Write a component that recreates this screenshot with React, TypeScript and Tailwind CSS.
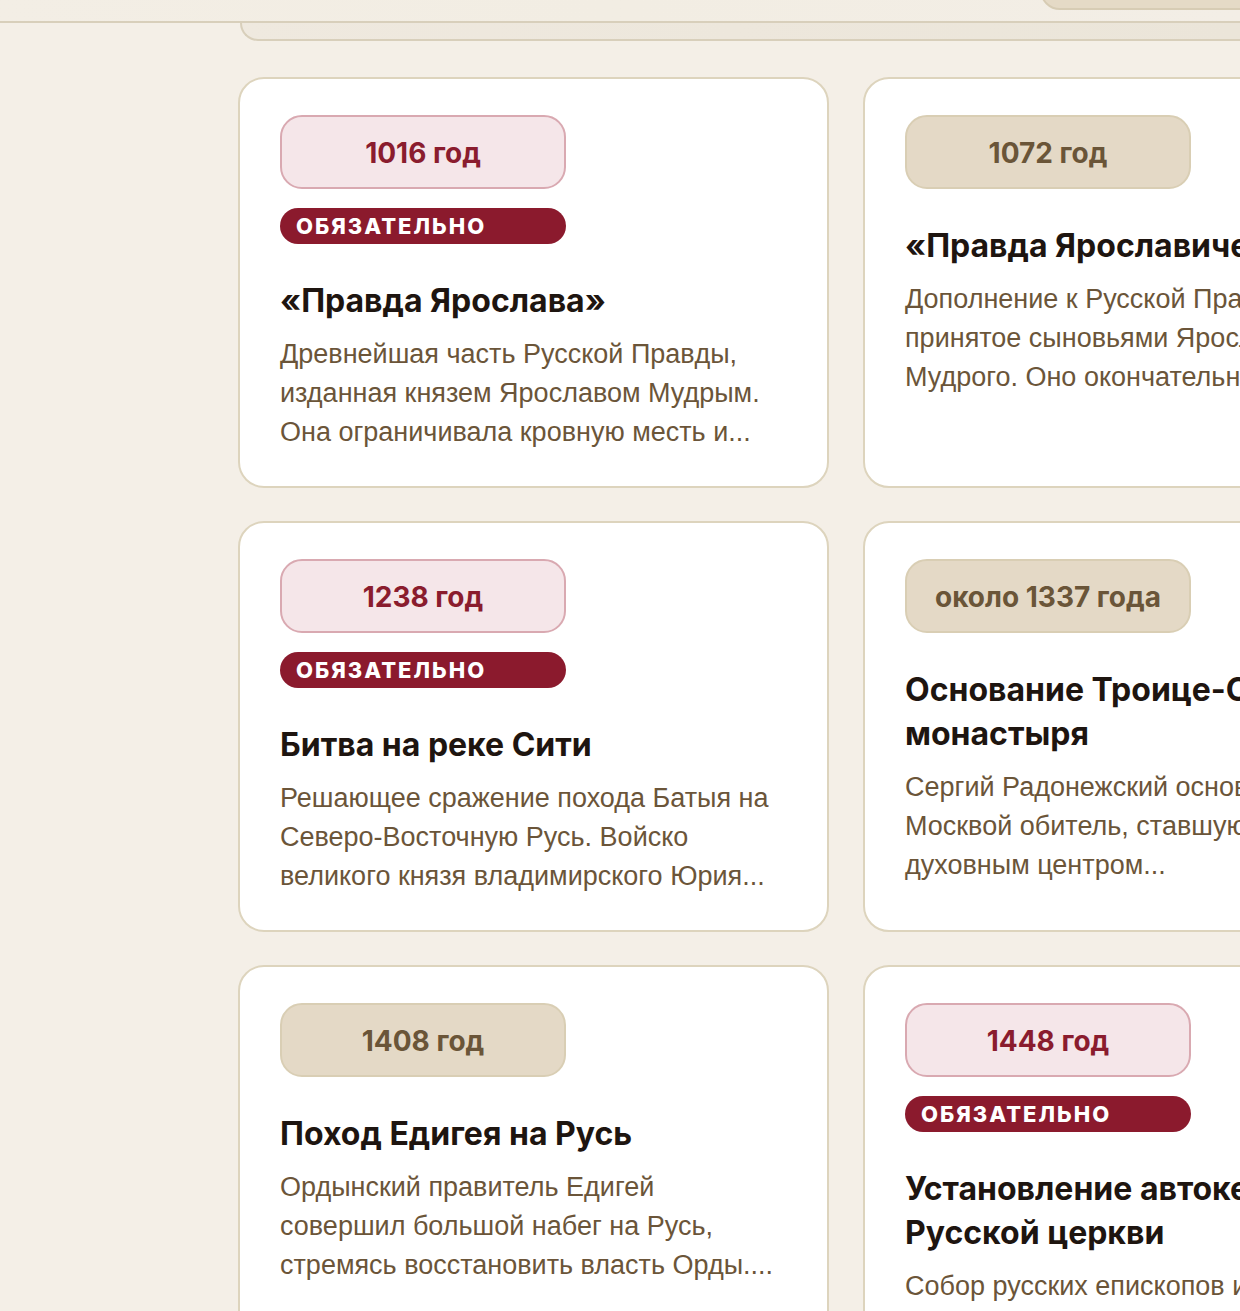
type Event = {
  year: string;
  required?: boolean;
  title: string;
  text: string;
};

const events: Event[] = [
  {
    year: "1016 год",
    required: true,
    title: "«Правда Ярослава»",
    text: "Древнейшая часть Русской Правды, изданная князем Ярославом Мудрым. Она ограничивала кровную месть и...",
  },
  {
    year: "1072 год",
    title: "«Правда Ярославичей»",
    text: "Дополнение к Русской Правде, принятое сыновьями Ярослава Мудрого. Оно окончательно отменило...",
  },
  {
    year: "1238 год",
    required: true,
    title: "Битва на реке Сити",
    text: "Решающее сражение похода Батыя на Северо-Восточную Русь. Войско великого князя владимирского Юрия...",
  },
  {
    year: "около 1337 года",
    title: "Основание Троице-Сергиева монастыря",
    text: "Сергий Радонежский основал под Москвой обитель, ставшую крупнейшим духовным центром...",
  },
  {
    year: "1408 год",
    title: "Поход Едигея на Русь",
    text: "Ордынский правитель Едигей совершил большой набег на Русь, стремясь восстановить власть Орды....",
  },
  {
    year: "1448 год",
    required: true,
    title: "Установление автокефалии Русской церкви",
    text: "Собор русских епископов избрал митрополитом Иону без согласия Константинополя...",
  },
];

function EventCard({ ev }: { ev: Event }) {
  return (
    <article className="rounded-[26px] border-2 border-[#ddd4bd] bg-white px-[40px] pt-[36px] pb-[34px]">
      <div
        className={
          ev.required
            ? "flex h-[74px] w-[286px] items-center justify-center rounded-[22px] border-2 border-[#d9a9b1] bg-[#f5e6e9] pt-[2px] text-[28px] font-bold text-[#8a1c2e]"
            : "flex h-[74px] w-[286px] items-center justify-center rounded-[22px] border-2 border-[#d9ceb4] bg-[#e4d9c6] pt-[2px] text-[28px] font-bold text-[#6a5538]"
        }
      >
        {ev.year}
      </div>
      {ev.required && (
        <div className="mt-[19px] flex h-[36px] w-[286px] items-center rounded-full bg-[#8b1a2d] pl-[16px] text-[22px] font-extrabold tracking-[2px] text-white">
          ОБЯЗАТЕЛЬНО
        </div>
      )}
      <h3 className="mt-[35px] text-[32px] leading-[44px] font-bold text-[#1e1510]">{ev.title}</h3>
      <p
        className="mt-[12px] text-[27px] leading-[39px] text-[#6b5539]"
        style={{ fontFamily: "'Liberation Sans', Arial, sans-serif" }}
      >
        {ev.text}
      </p>
    </article>
  );
}

export default function App() {
  return (
    <div
      className="min-h-screen overflow-hidden bg-[#f4efe7]"
      style={{ fontFamily: "Inter, 'Noto Sans', sans-serif" }}
    >
      {/* sticky header edge */}
      <header className="relative h-[23px] border-b-2 border-[#d8cfbb] bg-gradient-to-r from-[#f3eee5] via-[#f2ede3] to-[#f3eee6]">
        <div className="absolute right-[-40px] top-[-30px] h-[40px] w-[240px] rounded-[20px] border-2 border-[#d7ccb4] bg-[#e5dac6]" />
      </header>
      <div className="ml-[240px] h-[18px] rounded-bl-[18px] border-b-2 border-l-2 border-[#d8cfbb] bg-gradient-to-r from-[#efe9df] to-[#ebe5d9]" />

      <main className="grid grid-cols-[591px_591px] gap-x-[34px] gap-y-[33px] pt-[36px] pl-[238px] pb-10">
        {events.map((ev) => (
          <EventCard key={ev.year} ev={ev} />
        ))}
      </main>
    </div>
  );
}
